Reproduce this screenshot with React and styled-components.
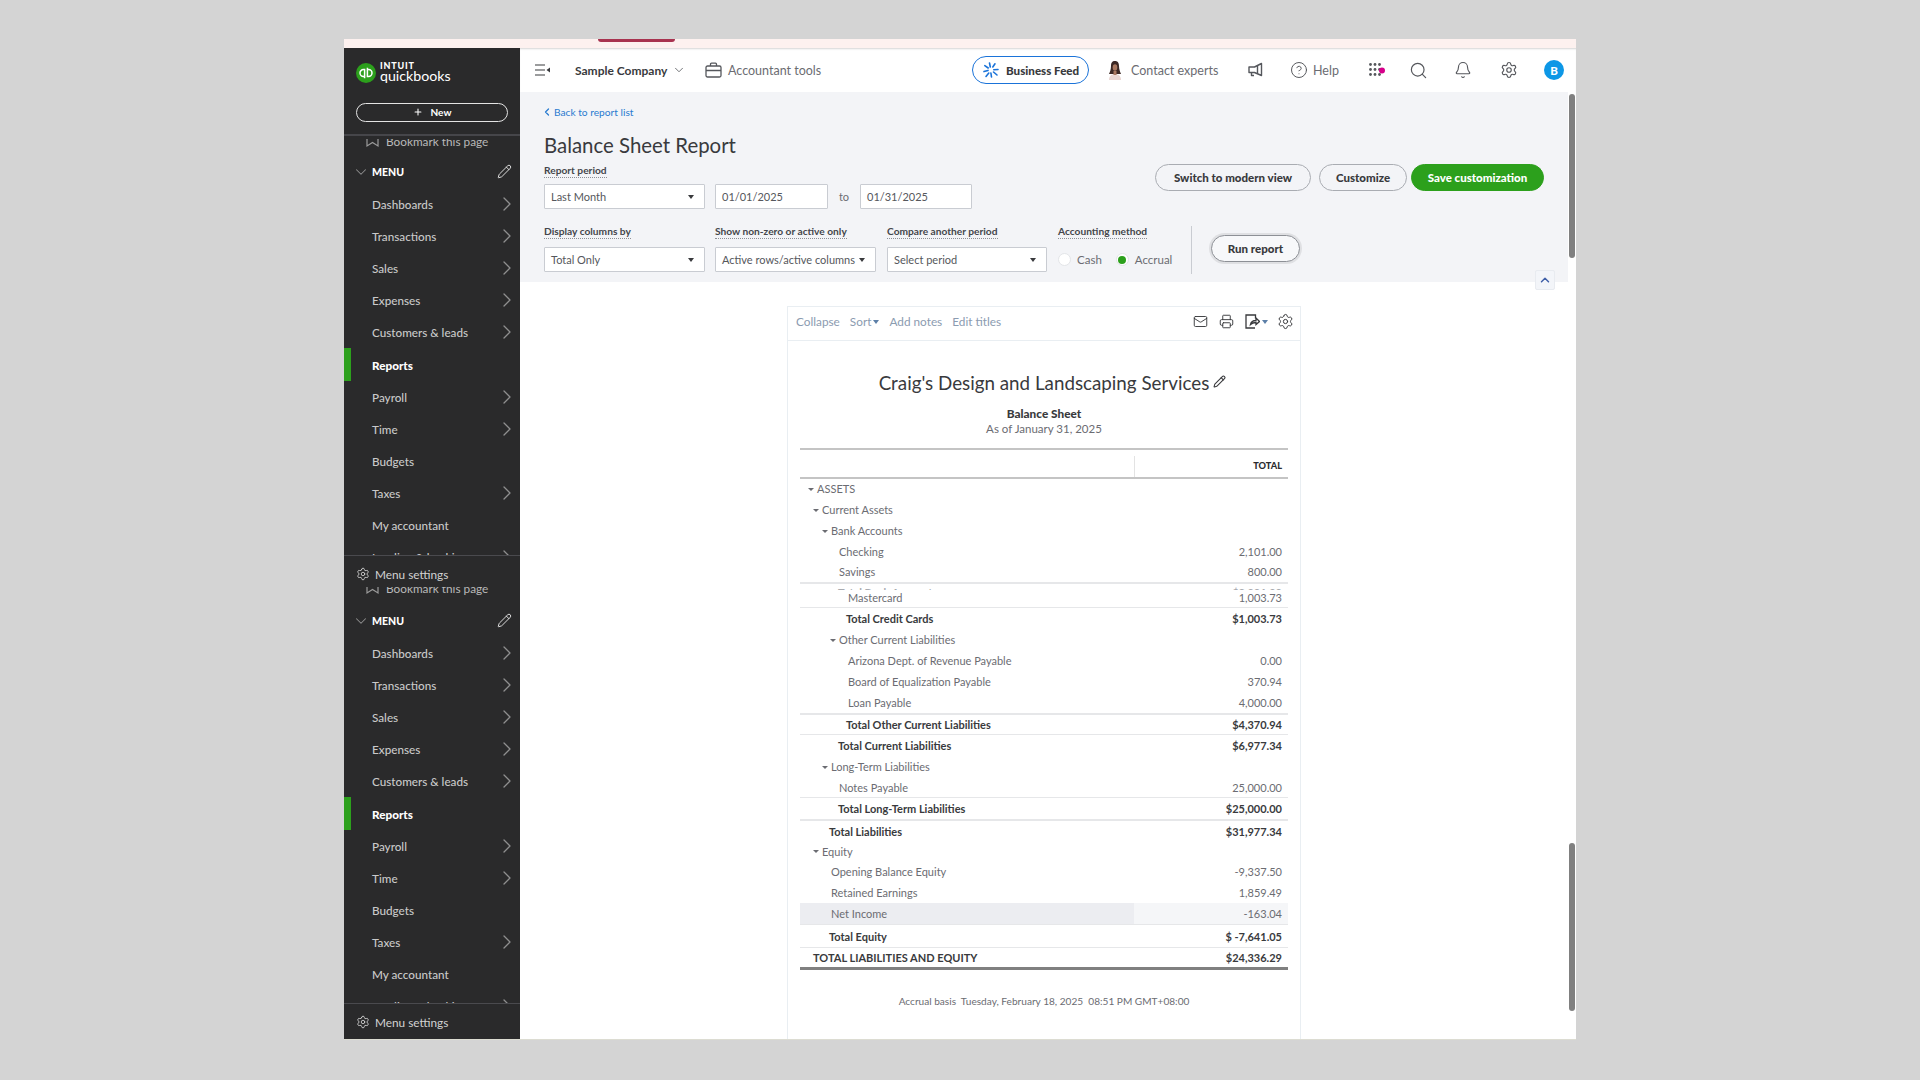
import React from 'react';
import styled, { createGlobalStyle } from 'styled-components';
import {
    Bell,
    ChevronDown,
    ChevronLeft,
    ChevronRight,
    ChevronUp,
    CircleHelp,
    Mail,
    Pencil,
    Plus,
    Printer,
    Search,
    Settings,
} from 'lucide-react';

const FONT = `Lato, "Liberation Sans", sans-serif`;

const GlobalStyle = createGlobalStyle`
    html, body {
        margin: 0;
        padding: 0;
        background: #d4d4d4;
    }
    * {
        box-sizing: border-box;
    }
    body {
        font-family: ${FONT};
        color: #393a3d;
    }
`;

const Page = styled.div`
    width: 1920px;
    height: 1080px;
    padding: 39px 344px 40px;
    overflow: hidden;
`;

const Window = styled.div`
    height: 1001px;
    display: flex;
    flex-direction: column;
    background: #fff;
    border-bottom: 1px solid #dcdcd2;
`;

const TopStrip = styled.div`
    height: 9px;
    flex: none;
    background: #fdf1ef;
    padding-left: 254px;
`;

const StripPill = styled.div`
    width: 77px;
    height: 3px;
    background: #a8334f;
    border-radius: 0 0 8px 8px;
`;

const Body = styled.div`
    flex: 1;
    min-height: 0;
    display: flex;
`;

/* sidebar */
const Sidebar = styled.aside`
    width: 176px;
    flex: none;
    display: flex;
    flex-direction: column;
    background: #2a2a2b;
    color: #c9c9c9;
    overflow: hidden;
`;

const SideHeader = styled.div`
    height: 88px;
    flex: none;
    padding: 11px 12px 0;
    border-bottom: 2px solid #46464a;
`;

const LogoRow = styled.div`
    display: flex;
    align-items: center;
    height: 27px;
    gap: 4px;
`;

const LogoText = styled.div`
    color: #fff;
    line-height: 1;
`;

const LogoIntuit = styled.div`
    font-size: 9px;
    font-weight: 900;
    letter-spacing: 0.8px;
    height: 9px;
    line-height: 9px;
`;

const LogoName = styled.div`
    font-size: 14.2px;
    font-weight: 400;
    height: 14px;
    line-height: 12px;
`;

const NewButton = styled.div`
    margin-top: 17px;
    height: 19px;
    padding-bottom: 1px;
    border: 1.5px solid #e4e4e4;
    border-radius: 10px;
    display: flex;
    align-items: center;
    justify-content: center;
    gap: 8px;
    color: #fff;
    font-size: 10px;
    font-weight: 700;
`;

const SidePanel = styled.div`
    flex: ${(p) => (p.$last ? '1' : 'none')};
    height: ${(p) => (p.$last ? 'auto' : '451px')};
    min-height: 0;
    display: flex;
    flex-direction: column;
`;

const SideScroll = styled.div`
    height: ${(p) => p.$h}px;
    margin-top: ${(p) => p.$clip}px;
    flex: none;
    overflow: hidden;
`;

const BookmarkRow = styled.div`
    height: 24px;
    margin-top: ${(p) => p.$top}px;
    margin-bottom: ${(p) => p.$bottom}px;
    padding-left: 22px;
    display: flex;
    align-items: center;
    gap: 7px;
    font-size: 11.8px;
    color: #b9b9b9;
`;

const MenuHead = styled.div`
    height: 33px;
    padding: 0 8px 0 8px;
    display: flex;
    align-items: center;
    color: #fff;
    font-size: 10.5px;
    font-weight: 900;
    svg {
        color: #8f8f8f;
    }
`;

const MenuHeadLabel = styled.span`
    flex: 1;
    margin-left: 2px;
`;

const MenuItem = styled.div`
    height: 32.1px;
    padding-left: ${(p) => (p.$active ? 21 : 28)}px;
    padding-right: 1px;
    display: flex;
    align-items: center;
    justify-content: space-between;
    font-size: 11.7px;
    color: ${(p) => (p.$active ? '#fff' : '#c9c9c9')};
    font-weight: ${(p) => (p.$active ? 900 : 500)};
    border-left: ${(p) => (p.$active ? '7px solid #2ca01c' : '0')};
    svg {
        color: #8f8f8f;
    }
`;

const SideFooter = styled.div`
    flex: 1;
    border-top: 1px solid #4a4a4e;
    padding: 11px 0 0 12px;
    display: flex;
    align-items: flex-start;
    gap: 5px;
    font-size: 11.8px;
    color: #d2d2d2;
`;

/* main column */
const Main = styled.div`
    flex: 1;
    min-width: 0;
    display: flex;
    flex-direction: column;
`;

const Nav = styled.header`
    height: 44px;
    flex: none;
    display: flex;
    align-items: center;
    padding-left: 15px;
    background: #fff;
    box-shadow: inset 0 2px 2px -1px #d6d6d6;
    color: #6b6c72;
    font-size: 12.5px;
    svg {
        flex: none;
        color: #55575c;
    }
`;

const NavSlot = styled.div`
    width: ${(p) => p.$w}px;
    flex: none;
    display: flex;
    align-items: center;
    padding-left: ${(p) => p.$pl || 0}px;
    gap: ${(p) => p.$gap || 0}px;
`;

const Company = styled.span`
    color: #393a3d;
    font-weight: 700;
    font-size: 12px;
`;

const FeedPill = styled.div`
    width: 117px;
    height: 28px;
    flex: none;
    border: 1.5px solid #1a73d9;
    border-radius: 14px;
    display: flex;
    align-items: center;
    gap: 7px;
    padding-left: 10px;
    color: #393a3d;
    font-weight: 900;
    font-size: 11.6px;
`;

const UserBadge = styled.div`
    width: 20px;
    height: 20px;
    border-radius: 50%;
    background: #0d97e6;
    color: #fff;
    font-size: 11.5px;
    font-weight: 900;
    display: flex;
    align-items: center;
    justify-content: center;
`;

const Workspace = styled.div`
    flex: 1;
    min-height: 0;
    display: flex;
`;

const ScrollColumn = styled.div`
    flex: 1;
    min-width: 0;
    display: flex;
    flex-direction: column;
`;

const ScrollTrack = styled.div`
    width: 8px;
    flex: none;
    padding: 2px 1px 0;
`;

const ScrollThumb = styled.div`
    height: ${(p) => p.$h}px;
    margin-bottom: ${(p) => p.$gap || 0}px;
    background: #808080;
    border-radius: 3px;
`;

/* filter panel */
const Filters = styled.section`
    position: relative;
    height: 189.5px;
    flex: none;
    background: #f3f4f7;
    padding: 13px 24px 0;
`;

const BackLink = styled.div`
    height: 14px;
    display: flex;
    align-items: center;
    gap: 1px;
    margin-left: -3px;
    color: #2a7bd0;
    font-size: 10.2px;
`;

const Title = styled.h1`
    margin: 11px 0 0;
    height: 30px;
    line-height: 30px;
    font-size: 20.4px;
    font-weight: 400;
    color: #393a3d;
`;

const PeriodRow = styled.div`
    margin-top: 4px;
    display: flex;
    justify-content: space-between;
`;

const FieldLabel = styled.div`
    height: 14px;
    line-height: 13px;
    margin-bottom: ${(p) => p.$gap || 8}px;
    font-size: 10.2px;
    font-weight: 700;
    color: #44464b;
    width: fit-content;
    border-bottom: 1px dotted #8d9096;
`;

const FieldLine = styled.div`
    display: flex;
    align-items: center;
`;

const Field = styled.div`
    width: ${(p) => p.$w}px;
    height: 25px;
    margin-left: ${(p) => p.$ml || 0}px;
    background: #fff;
    border: 1px solid #c9ccd2;
    border-radius: 1px;
    padding: 0 10px 0 6px;
    display: flex;
    align-items: center;
    justify-content: space-between;
    white-space: nowrap;
    font-size: 11px;
    color: #55575c;
`;

const Arrow = styled.span`
    width: 0;
    height: 0;
    border-left: 3.5px solid transparent;
    border-right: 3.5px solid transparent;
    border-top: 4.5px solid #393a3d;
`;

const ToWord = styled.div`
    width: 32px;
    text-align: center;
    font-size: 11px;
    color: #6b6c72;
`;

const Actions = styled.div`
    display: flex;
    gap: 4px;
`;

const Pill = styled.div`
    width: ${(p) => p.$w}px;
    height: 27px;
    margin-left: ${(p) => p.$ml || 0}px;
    border-radius: 14px;
    border: 1px solid ${(p) => (p.$primary ? '#2ca01c' : '#a9acb2')};
    background: ${(p) => (p.$primary ? '#2ca01c' : 'transparent')};
    color: ${(p) => (p.$primary ? '#fff' : '#393a3d')};
    display: flex;
    align-items: center;
    justify-content: center;
    font-size: 11.5px;
    font-weight: 900;
`;

const SecondRow = styled.div`
    margin-top: 16px;
    display: flex;
`;

const FieldGroup = styled.div`
    width: ${(p) => p.$w}px;
    flex: none;
`;

const RadioLine = styled.div`
    height: 25px;
    display: flex;
    align-items: center;
    font-size: 11.5px;
    color: #6b6c72;
`;

const Radio = styled.span`
    width: 13px;
    height: 13px;
    flex: none;
    border-radius: 50%;
    background: #fff;
    border: 1px solid #e3e5e8;
    margin-right: 6px;
    display: flex;
    align-items: center;
    justify-content: center;
    &::after {
        content: '';
        width: 8px;
        height: 8px;
        border-radius: 50%;
        background: ${(p) => (p.$on ? '#2ca01c' : 'transparent')};
    }
`;

const RadioText = styled.span`
    margin-right: ${(p) => p.$gap || 0}px;
`;

const VRule = styled.div`
    width: 1px;
    height: 48px;
    margin: 1px 19px 0 0;
    background: #c9ccd2;
`;

const RunButton = styled.div`
    width: 89px;
    height: 27px;
    margin-top: 10px;
    border: 1px solid #8d9096;
    border-radius: 14px;
    background: #f7f8fa;
    box-shadow: 0 0 0 2px #dfe0e3;
    display: flex;
    align-items: center;
    justify-content: center;
    font-size: 11.5px;
    font-weight: 900;
    color: #393a3d;
`;

const CollapseTab = styled.div`
    position: absolute;
    right: 13px;
    bottom: -8px;
    width: 20px;
    height: 20px;
    background: #f3f5f9;
    border: 1px solid #e8ebf0;
    border-radius: 2px;
    color: #3f5fa8;
    display: flex;
    align-items: center;
    justify-content: center;
`;

/* report */
const ReportArea = styled.section`
    flex: 1;
    min-height: 0;
    overflow: hidden;
    padding: 24.5px 0 0 267px;
`;

const Card = styled.div`
    width: 514px;
    height: 100%;
    border: 1px solid #e9eef2;
    border-bottom: 0;
`;

const Toolbar = styled.div`
    height: 34px;
    border-bottom: 1px solid #e9eef2;
    display: flex;
    align-items: center;
    padding: 0 6px 4px 8px;
    color: #8b9bb0;
    font-size: 11.8px;
`;

const ToolLink = styled.span`
    margin-right: ${(p) => p.$gap}px;
    display: flex;
    align-items: center;
    gap: 2px;
`;

const ToolIcons = styled.div`
    margin-left: auto;
    display: flex;
    align-items: center;
    color: #393a3d;
    gap: 11px;
`;

const ExportGroup = styled.div`
    display: flex;
    align-items: center;
    gap: 2px;
    margin-right: -2px;
`;

const SmallCaret = styled.span`
    width: 0;
    height: 0;
    border-left: 3.5px solid transparent;
    border-right: 3.5px solid transparent;
    border-top: 4px solid ${(p) => p.$color || '#5c7fa8'};
`;

const ReportBody = styled.div`
    padding: 28px 12px 0;
`;

const CompanyLine = styled.div`
    display: grid;
    grid-template-columns: 1fr auto 1fr;
    align-items: center;
    height: 26px;
    font-size: 18.8px;
    font-weight: 400;
    color: #393a3d;
`;

const CompanyEdit = styled.div`
    padding: 0 0 1px 4px;
    display: flex;
    align-items: center;
`;

const SheetName = styled.div`
    margin-top: 12px;
    height: 14px;
    line-height: 14px;
    text-align: center;
    font-size: 11.8px;
    font-weight: 900;
`;

const SheetDate = styled.div`
    height: 15px;
    line-height: 15px;
    text-align: center;
    font-size: 11.5px;
    color: #6b6c72;
`;

const TableHead = styled.div`
    margin-top: 12px;
    height: 31px;
    border-top: 2px solid #c4c4c4;
    border-bottom: 2px solid #c4c4c4;
    display: grid;
    grid-template-columns: 334px 1fr;
`;

const TotalCell = styled.div`
    margin-top: 6px;
    border-left: 1px solid #e3e3e3;
    padding: 4px 6px 0 0;
    text-align: right;
    font-size: 9.2px;
    font-weight: 900;
    color: #2b2c2f;
`;

const Row = styled.div`
    height: ${(p) => p.$h || 21}px;
    padding-bottom: ${(p) => p.$pb || 0}px;
    display: grid;
    grid-template-columns: 334px 1fr;
    align-items: center;
    font-size: 11px;
    color: ${(p) => (p.$bold ? '#393a3d' : '#6b6c72')};
    font-weight: ${(p) => (p.$bold ? 700 : 400)};
    border-bottom: ${(p) => (p.$line ? `${p.$line}px solid #e6e7e9` : '0')};
    overflow: hidden;
`;

const RowName = styled.div`
    display: flex;
    align-items: center;
    height: 100%;
    padding-left: ${(p) => p.$indent}px;
    background: ${(p) => (p.$hl ? '#ecedf1' : 'transparent')};
`;

const RowValue = styled.div`
    display: flex;
    align-items: center;
    justify-content: flex-end;
    height: 100%;
    padding-right: 6px;
    background: ${(p) => (p.$hl ? '#f5f6f8' : 'transparent')};
`;

const RowCaret = styled.span`
    width: 0;
    height: 0;
    margin: 1px 3px 0 0;
    border-left: 3px solid transparent;
    border-right: 3px solid transparent;
    border-top: 3.5px solid #6b6c72;
`;

const Seam = styled.div`
    height: 6px;
    padding-top: 2px;
    overflow: hidden;
    display: grid;
    grid-template-columns: 334px 1fr;
    font-size: 11px;
    font-weight: 700;
    line-height: 14px;
    color: #a9abb0;
`;

const SeamName = styled.div`
    padding-left: 38px;
`;

const SeamValue = styled.div`
    padding-right: 6px;
    text-align: right;
`;

const EndLine = styled.div`
    height: 3px;
    background: #808080;
`;

const ReportFoot = styled.div`
    margin-top: 24px;
    height: 14px;
    line-height: 14px;
    text-align: center;
    white-space: pre;
    font-size: 10.1px;
    color: #6b6c72;
`;

const QbMark = () => (
    <svg width="20" height="20" viewBox="0 0 20 20">
        <circle cx="10" cy="10" r="10" fill="#2ca01c" />
        <g fill="none" stroke="#fff" strokeWidth="1.5">
            <path d="M9 13.4H7.400a3.400 3.400 0 0 1 0-6.800h1.200v8.600" />
            <path d="M11 6.600h1.600a3.400 3.400 0 0 1 0 6.800h-1.200V4.800" />
        </g>
    </svg>
);

const BookmarkIcon = () => (
    <svg width="13" height="13" viewBox="0 0 13 13" fill="none" stroke="#9b9b9b" strokeWidth="1.2">
        <path d="M1 1v10l5.500-3.500L12 11V1z" />
    </svg>
);

const MenuToggle = () => (
    <svg width="15" height="12" viewBox="0 0 15 12" fill="none" stroke="#393a3d" strokeWidth="1.2">
        <path d="M0 1h10M0 6h10M0 11h10" />
        <path d="M15 3.500v5L11.500 6z" fill="#393a3d" stroke="none" />
    </svg>
);

const Briefcase = () => (
    <svg width="17" height="17" viewBox="0 0 17 17" fill="none" stroke="#55575c" strokeWidth="1.3">
        <rect x="1" y="4" width="15" height="11" rx="1.500" />
        <path d="M5.500 4V2.200c0-.6.4-1 1-1h4c.6 0 1 .4 1 1V4M1 8.500h15" />
    </svg>
);

const Sparkle = () => (
    <svg width="16" height="16" viewBox="0 0 16 16" fill="none" stroke="#1a73d9" strokeWidth="1.6" strokeLinecap="round">
        <path d="M6.500 1l.8 4M12 1.800 9.800 5M15 7.500l-4.200.3M14 13 10.500 10M8.500 15l-.6-4M3 14.500l2.800-3.400M1 9.600l4-1.200M1.800 3.600l3.400 2.400" />
    </svg>
);

const Avatar = () => (
    <svg width="16" height="20" viewBox="0 0 16 20">
        <path d="M8 1c3 0 4 2.200 4 5s1 6 2 8H2c1-2 2-5 2-8s1-5 4-5z" fill="#3b2723" />
        <ellipse cx="8" cy="7.500" rx="2.300" ry="3.200" fill="#a8775f" />
        <path d="M2 20c0-4 2.500-6 6-6s6 2 6 6z" fill="#e9d6d2" />
        <path d="M6.500 11h3v4h-3z" fill="#a8775f" />
    </svg>
);

const Megaphone = () => (
    <svg width="16" height="16" viewBox="0 0 16 16" fill="none" stroke="#55575c" strokeWidth="1.4" strokeLinejoin="round">
        <path d="M14.500 1.500v12L7.500 10.500H2V5h5.500z" />
        <path d="M10.500 3.200v8.800M4.500 10.500v3h2.500" />
    </svg>
);

const AppGrid = () => (
    <svg width="17" height="15" viewBox="0 0 17 15" fill="#55575c">
        {[1.5, 6.5, 11.5].map((y) =>
            [1.5, 6, 10.5].map((x) => <circle key={`${x}-${y}`} cx={x} cy={y} r="1.4" />)
        )}
        <circle cx="13" cy="7.500" r="3" fill="#d6008a" />
    </svg>
);

const ExportIcon = () => (
    <svg width="15" height="15" viewBox="0 0 15 15" fill="none" stroke="#393a3d" strokeWidth="1.3">
        <path d="M10.500 4.500V1H1v13h9" />
        <path d="M5.500 10.500c.5-2.500 2.500-4 5.500-4V4l3.500 3.500-3.500 3V8.500c-2 0-4 .5-5.500 2z" />
    </svg>
);

const MENU_ITEMS = [
    { label: 'Dashboards', arrow: true },
    { label: 'Transactions', arrow: true },
    { label: 'Sales', arrow: true },
    { label: 'Expenses', arrow: true },
    { label: 'Customers & leads', arrow: true },
    { label: 'Reports', active: true },
    { label: 'Payroll', arrow: true },
    { label: 'Time', arrow: true },
    { label: 'Budgets' },
    { label: 'Taxes', arrow: true },
    { label: 'My accountant' },
    { label: 'Lending & banking', arrow: true },
];

const SideMenu = ({ height, clip, top, bottom, last }) => (
    <SidePanel $last={last}>
        <SideScroll $h={height} $clip={clip}>
            <BookmarkRow $top={top} $bottom={bottom}>
                <BookmarkIcon />
                Bookmark this page
            </BookmarkRow>
            <MenuHead>
                <ChevronDown size={18} strokeWidth={1.4} />
                <MenuHeadLabel>MENU</MenuHeadLabel>
                <Pencil size={15} color="#e8e8e8" strokeWidth={1.5} />
            </MenuHead>
            {MENU_ITEMS.map((item) => (
                <MenuItem key={item.label} $active={item.active}>
                    {item.label}
                    {item.arrow && <ChevronRight size={24} strokeWidth={1.3} />}
                </MenuItem>
            ))}
        </SideScroll>
        <SideFooter>
            <Settings size={14} strokeWidth={1.5} />
            Menu settings
        </SideFooter>
    </SidePanel>
);

const ROWS = [
    { name: 'ASSETS', indent: 17, caret: true, h: 20, pb: 1 },
    { name: 'Current Assets', indent: 22, caret: true },
    { name: 'Bank Accounts', indent: 31, caret: true },
    { name: 'Checking', indent: 39, value: '2,101.00', h: 20 },
    { name: 'Savings', indent: 39, value: '800.00', h: 23, pb: 1, line: 2 },
    { seam: true },
    { name: 'Mastercard', indent: 48, value: '1,003.73', h: 18, pb: 3, line: 1 },
    { name: 'Total Credit Cards', indent: 46, value: '$1,003.73', bold: true },
    { name: 'Other Current Liabilities', indent: 39, caret: true },
    { name: 'Arizona Dept. of Revenue Payable', indent: 48, value: '0.00' },
    { name: 'Board of Equalization Payable', indent: 48, value: '370.94' },
    { name: 'Loan Payable', indent: 48, value: '4,000.00', h: 23, line: 2 },
    { name: 'Total Other Current Liabilities', indent: 46, value: '$4,370.94', bold: true, h: 20, line: 1 },
    { name: 'Total Current Liabilities', indent: 38, value: '$6,977.34', bold: true },
    { name: 'Long-Term Liabilities', indent: 31, caret: true },
    { name: 'Notes Payable', indent: 39, value: '25,000.00', line: 1 },
    { name: 'Total Long-Term Liabilities', indent: 38, value: '$25,000.00', bold: true, h: 23, line: 2 },
    { name: 'Total Liabilities', indent: 29, value: '$31,977.34', bold: true, h: 20 },
    { name: 'Equity', indent: 22, caret: true, h: 20 },
    { name: 'Opening Balance Equity', indent: 31, value: '-9,337.50' },
    { name: 'Retained Earnings', indent: 31, value: '1,859.49' },
    { name: 'Net Income', indent: 31, value: '-163.04', hl: true, h: 22, line: 1 },
    { name: 'Total Equity', indent: 29, value: '$ -7,641.05', bold: true, h: 23, line: 1 },
    { name: 'TOTAL LIABILITIES AND EQUITY', indent: 13, value: '$24,336.29', bold: true, h: 19 },
];

const App = () => (
    <Page>
        <GlobalStyle />
        <Window>
            <TopStrip>
                <StripPill />
            </TopStrip>
            <Body>
                <Sidebar>
                    <SideHeader>
                        <LogoRow>
                            <QbMark />
                            <LogoText>
                                <LogoIntuit>INTUIT</LogoIntuit>
                                <LogoName>quickbooks</LogoName>
                            </LogoText>
                        </LogoRow>
                        <NewButton>
                            <Plus size={10} strokeWidth={2.5} />
                            New
                        </NewButton>
                    </SideHeader>
                    <SideMenu height={416} clip={3} top={-10} bottom={2} />
                    <SideMenu height={416} clip={0} top={-11} bottom={4} last />
                </Sidebar>
                <Main>
                    <Nav>
                        <NavSlot $w={40}>
                            <MenuToggle />
                        </NavSlot>
                        <NavSlot $w={130} $gap={5}>
                            <Company>Sample Company</Company>
                            <ChevronDown size={14} strokeWidth={1.4} />
                        </NavSlot>
                        <NavSlot $w={267} $gap={6}>
                            <Briefcase />
                            Accountant tools
                        </NavSlot>
                        <FeedPill>
                            <Sparkle />
                            Business Feed
                        </FeedPill>
                        <NavSlot $w={158} $gap={8} $pl={18}>
                            <Avatar />
                            Contact experts
                        </NavSlot>
                        <NavSlot $w={35}>
                            <Megaphone />
                        </NavSlot>
                        <NavSlot $w={87} $gap={5} $pl={8}>
                            <CircleHelp size={18} strokeWidth={1.3} />
                            Help
                        </NavSlot>
                        <NavSlot $w={40}>
                            <AppGrid />
                        </NavSlot>
                        <NavSlot $w={45}>
                            <Search size={19} strokeWidth={1.5} />
                        </NavSlot>
                        <NavSlot $w={46}>
                            <Bell size={18} strokeWidth={1.5} />
                        </NavSlot>
                        <NavSlot $w={44}>
                            <Settings size={18} strokeWidth={1.5} />
                        </NavSlot>
                        <UserBadge>B</UserBadge>
                    </Nav>
                    <Workspace>
                        <ScrollColumn>
                            <Filters>
                                <BackLink>
                                    <ChevronLeft size={12} strokeWidth={2.5} />
                                    Back to report list
                                </BackLink>
                                <Title>Balance Sheet Report</Title>
                                <PeriodRow>
                                    <div>
                                        <FieldLabel $gap={6}>Report period</FieldLabel>
                                        <FieldLine>
                                            <Field $w={161}>
                                                Last Month
                                                <Arrow />
                                            </Field>
                                            <Field $w={113} $ml={10}>
                                                01/01/2025
                                            </Field>
                                            <ToWord>to</ToWord>
                                            <Field $w={112}>01/31/2025</Field>
                                        </FieldLine>
                                    </div>
                                    <Actions>
                                        <Pill $w={156}>Switch to modern view</Pill>
                                        <Pill $w={88} $ml={4}>
                                            Customize
                                        </Pill>
                                        <Pill $w={133} $primary>
                                            Save customization
                                        </Pill>
                                    </Actions>
                                </PeriodRow>
                                <SecondRow>
                                    <FieldGroup $w={171}>
                                        <FieldLabel>Display columns by</FieldLabel>
                                        <Field $w={161}>
                                            Total Only
                                            <Arrow />
                                        </Field>
                                    </FieldGroup>
                                    <FieldGroup $w={172}>
                                        <FieldLabel>Show non-zero or active only</FieldLabel>
                                        <Field $w={161}>
                                            Active rows/active columns
                                            <Arrow />
                                        </Field>
                                    </FieldGroup>
                                    <FieldGroup $w={171}>
                                        <FieldLabel>Compare another period</FieldLabel>
                                        <Field $w={160}>
                                            Select period
                                            <Arrow />
                                        </Field>
                                    </FieldGroup>
                                    <FieldGroup $w={133}>
                                        <FieldLabel>Accounting method</FieldLabel>
                                        <RadioLine>
                                            <Radio />
                                            <RadioText $gap={14}>Cash</RadioText>
                                            <Radio $on />
                                            <RadioText>Accrual</RadioText>
                                        </RadioLine>
                                    </FieldGroup>
                                    <VRule />
                                    <RunButton>Run report</RunButton>
                                </SecondRow>
                                <CollapseTab>
                                    <ChevronUp size={14} strokeWidth={2.5} />
                                </CollapseTab>
                            </Filters>
                            <ReportArea>
                                <Card>
                                    <Toolbar>
                                        <ToolLink $gap={10}>Collapse</ToolLink>
                                        <ToolLink $gap={10}>
                                            Sort
                                            <SmallCaret />
                                        </ToolLink>
                                        <ToolLink $gap={10}>Add notes</ToolLink>
                                        <ToolLink $gap={0}>Edit titles</ToolLink>
                                        <ToolIcons>
                                            <Mail size={15} strokeWidth={1.5} />
                                            <Printer size={15} strokeWidth={1.5} />
                                            <ExportGroup>
                                                <ExportIcon />
                                                <SmallCaret />
                                            </ExportGroup>
                                            <Settings size={17} strokeWidth={1.4} />
                                        </ToolIcons>
                                    </Toolbar>
                                    <ReportBody>
                                        <CompanyLine>
                                            <span />
                                            Craig's Design and Landscaping Services
                                            <CompanyEdit>
                                                <Pencil size={13} strokeWidth={2} />
                                            </CompanyEdit>
                                        </CompanyLine>
                                        <SheetName>Balance Sheet</SheetName>
                                        <SheetDate>As of January 31, 2025</SheetDate>
                                        <TableHead>
                                            <span />
                                            <TotalCell>TOTAL</TotalCell>
                                        </TableHead>
                                        {ROWS.map((row, i) =>
                                            row.seam ? (
                                                <Seam key={i}>
                                                    <SeamName>Total Bank Accounts</SeamName>
                                                    <SeamValue>$2,901.00</SeamValue>
                                                </Seam>
                                            ) : (
                                                <Row
                                                    key={row.name}
                                                    $h={row.h}
                                                    $pb={row.pb}
                                                    $bold={row.bold}
                                                    $line={row.line}
                                                >
                                                    <RowName
                                                        $indent={row.caret ? row.indent - 9 : row.indent}
                                                        $hl={row.hl}
                                                    >
                                                        {row.caret && <RowCaret />}
                                                        {row.name}
                                                    </RowName>
                                                    <RowValue $hl={row.hl}>{row.value}</RowValue>
                                                </Row>
                                            )
                                        )}
                                        <EndLine />
                                        <ReportFoot>
                                            {'Accrual basis  Tuesday, February 18, 2025  08:51 PM GMT+08:00'}
                                        </ReportFoot>
                                    </ReportBody>
                                </Card>
                            </ReportArea>
                        </ScrollColumn>
                        <ScrollTrack>
                            <ScrollThumb $h={164} $gap={585} />
                            <ScrollThumb $h={168} />
                        </ScrollTrack>
                    </Workspace>
                </Main>
            </Body>
        </Window>
    </Page>
);

export default App;
